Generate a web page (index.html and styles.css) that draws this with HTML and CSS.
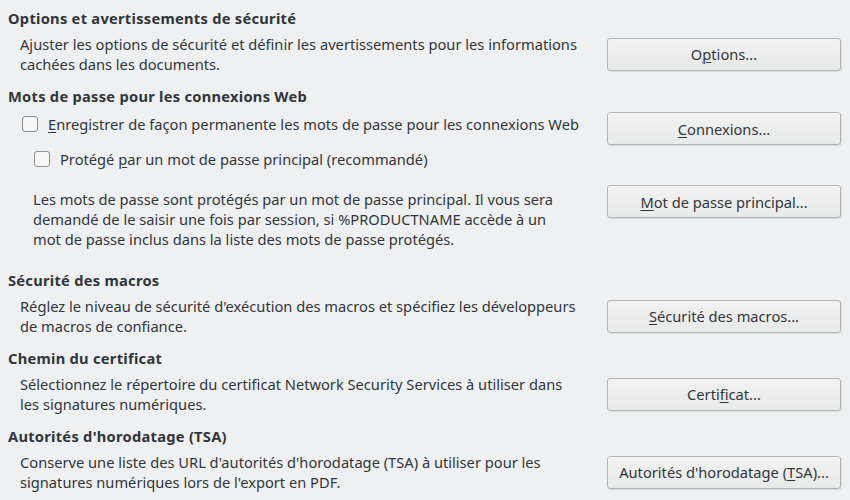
FILE: index.html
```html
<!DOCTYPE html>
<html lang="fr">
<head>
<meta charset="utf-8">
<link rel="stylesheet" href="styles.css">
</head>
<body>
<div class="page">
  <section class="sec">
    <h2 class="title">Options et avertissements de sécurité</h2>
    <div class="row">
      <p class="desc">Ajuster les options de sécurité et définir les avertissements pour les informations cachées dans les documents.</p>
      <button class="btn">O<u>p</u>tions...</button>
    </div>
  </section>

  <section class="sec">
    <h2 class="title">Mots de passe pour les connexions Web</h2>
    <div class="row row-check">
      <label class="check"><span class="box"></span><span><u>E</u>nregistrer de façon permanente les mots de passe pour les connexions Web</span></label>
      <button class="btn"><u>C</u>onnexions...</button>
    </div>
    <div class="row-sub">
      <label class="check"><span class="box"></span><span>Protégé <u>p</u>ar un mot de passe principal (recommandé)</span></label>
    </div>
    <div class="row row-master">
      <p class="desc deep">Les mots de passe sont protégés par un mot de passe principal. Il vous sera demandé de le saisir une fois par session, si %PRODUCTNAME accède à un mot de passe inclus dans la liste des mots de passe protégés.</p>
      <button class="btn"><u>M</u>ot de passe principal...</button>
    </div>
  </section>

  <section class="sec">
    <h2 class="title">Sécurité des macros</h2>
    <div class="row">
      <p class="desc">Réglez le niveau de sécurité d'exécution des macros et spécifiez les développeurs de macros de confiance.</p>
      <button class="btn"><u>S</u>écurité des macros...</button>
    </div>
  </section>

  <section class="sec">
    <h2 class="title">Chemin du certificat</h2>
    <div class="row">
      <p class="desc">Sélectionnez le répertoire du certificat Network Security Services à utiliser dans les signatures numériques.</p>
      <button class="btn">Certi<u>fi</u>cat...</button>
    </div>
  </section>

  <section class="sec">
    <h2 class="title">Autorités d'horodatage (TSA)</h2>
    <div class="row">
      <p class="desc">Conserve une liste des URL d'autorités d'horodatage (TSA) à utiliser pour les signatures numériques lors de l'export en PDF.</p>
      <button class="btn">Autorités d'horodatage (<u>T</u>SA)...</button>
    </div>
  </section>
</div>
</body>
</html>
```

FILE: styles.css
```css
* { box-sizing: border-box; }
html, body {
  margin: 0;
  background: #eff0f1;
}
body {
  font-family: "Noto Sans", "Open Sans", sans-serif;
  font-size: 14.67px;
  color: #31363b;
  width: 850px;
  height: 500px;
  overflow: hidden;
}
.page {
  padding: 8px 9px 0 8px;
  display: flex;
  flex-direction: column;
}
.sec {
  display: flex;
  flex-direction: column;
}
.title {
  margin: 0;
  font-size: 14.67px;
  font-weight: bold;
  line-height: 20px;
  letter-spacing: 0.27px;
}
.row {
  display: grid;
  grid-template-columns: 1fr 234px;
  column-gap: 22px;
  align-items: center;
  padding: 6px 0 12px 12px;
}
.desc {
  margin: 0;
  line-height: 20px;
}
.btn {
  width: 234px;
  height: 33px;
  font: inherit;
  color: #31363b;
  background: linear-gradient(#f2f2f2, #e8e9e9);
  border: 1px solid #b2b3b4;
  border-radius: 3px;
  box-shadow: 1px 1px 1px rgba(0,0,0,0.08);
  padding: 0 8px;
  white-space: nowrap;
}
u { text-decoration-thickness: 1px; text-underline-offset: 2px; }
.check {
  display: flex;
  align-items: center;
  gap: 10px;
  line-height: 20px;
}
.box {
  width: 16px;
  height: 16px;
  border: 1px solid #8c8f93;
  border-radius: 3px;
  background: #f7f7f7;
  flex: none;
}
.row-check {
  align-items: start;
  padding: 6px 0 0 14px;
}
.row-check .check {
  margin-top: 2px;
  white-space: nowrap;
}
.row-sub {
  padding: 4px 0 0 26px;
}
.row-master {
  align-items: start;
  padding: 16px 0 21px 12px;
}
.desc.deep {
  padding: 4px 12px 0 13px;
}
```
